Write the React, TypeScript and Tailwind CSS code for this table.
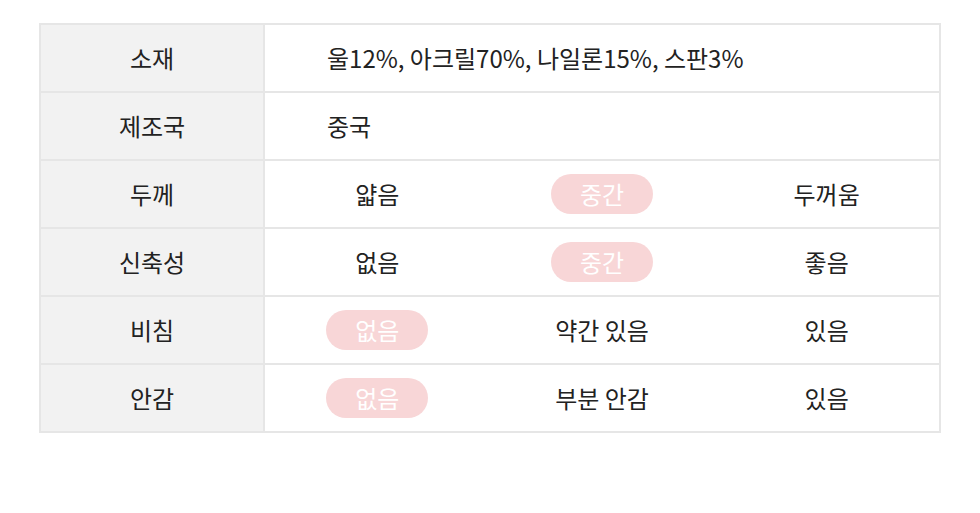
const FONT = "font-['Noto_Sans_CJK_KR','Noto_Sans',sans-serif]";

type Opt = { text: string; on?: boolean };

const rows: { label: string; value?: string; opts?: Opt[] }[] = [
  { label: "소재", value: "울12%, 아크릴70%, 나일론15%, 스판3%" },
  { label: "제조국", value: "중국" },
  { label: "두께", opts: [{ text: "얇음" }, { text: "중간", on: true }, { text: "두꺼움" }] },
  { label: "신축성", opts: [{ text: "없음" }, { text: "중간", on: true }, { text: "좋음" }] },
  { label: "비침", opts: [{ text: "없음", on: true }, { text: "약간 있음" }, { text: "있음" }] },
  { label: "안감", opts: [{ text: "없음", on: true }, { text: "부분 안감" }, { text: "있음" }] },
];

const OptionCell = ({ opt }: { opt: Opt }) => (
  <div className="flex items-center justify-center">
    {opt.on ? (
      <span className="flex h-[40px] w-[102px] items-center justify-center rounded-full bg-[#f8d6d7] text-white">
        {opt.text}
      </span>
    ) : (
      <span>{opt.text}</span>
    )}
  </div>
);

const App = () => {
  return (
    <div className={`min-h-[513px] bg-white pt-[23px] px-[39px] ${FONT} text-[24px] leading-none text-[#222]`}>
      <div className="w-[902px] border-2 border-[#e6e6e6] border-b-0">
        {rows.map((row) => (
          <div key={row.label} className="flex h-[68px] border-b-2 border-[#e6e6e6]">
            <div className="flex w-[224px] items-center justify-center border-r-2 border-[#e6e6e6] bg-[#f2f2f2]">
              {row.label}
            </div>
            {row.opts ? (
              <div className="grid flex-1 grid-cols-3">
                {row.opts.map((opt, i) => (
                  <OptionCell key={i} opt={opt} />
                ))}
              </div>
            ) : (
              <div className="flex flex-1 items-center pl-[62px]">{row.value}</div>
            )}
          </div>
        ))}
      </div>
    </div>
  );
};

export default App;
